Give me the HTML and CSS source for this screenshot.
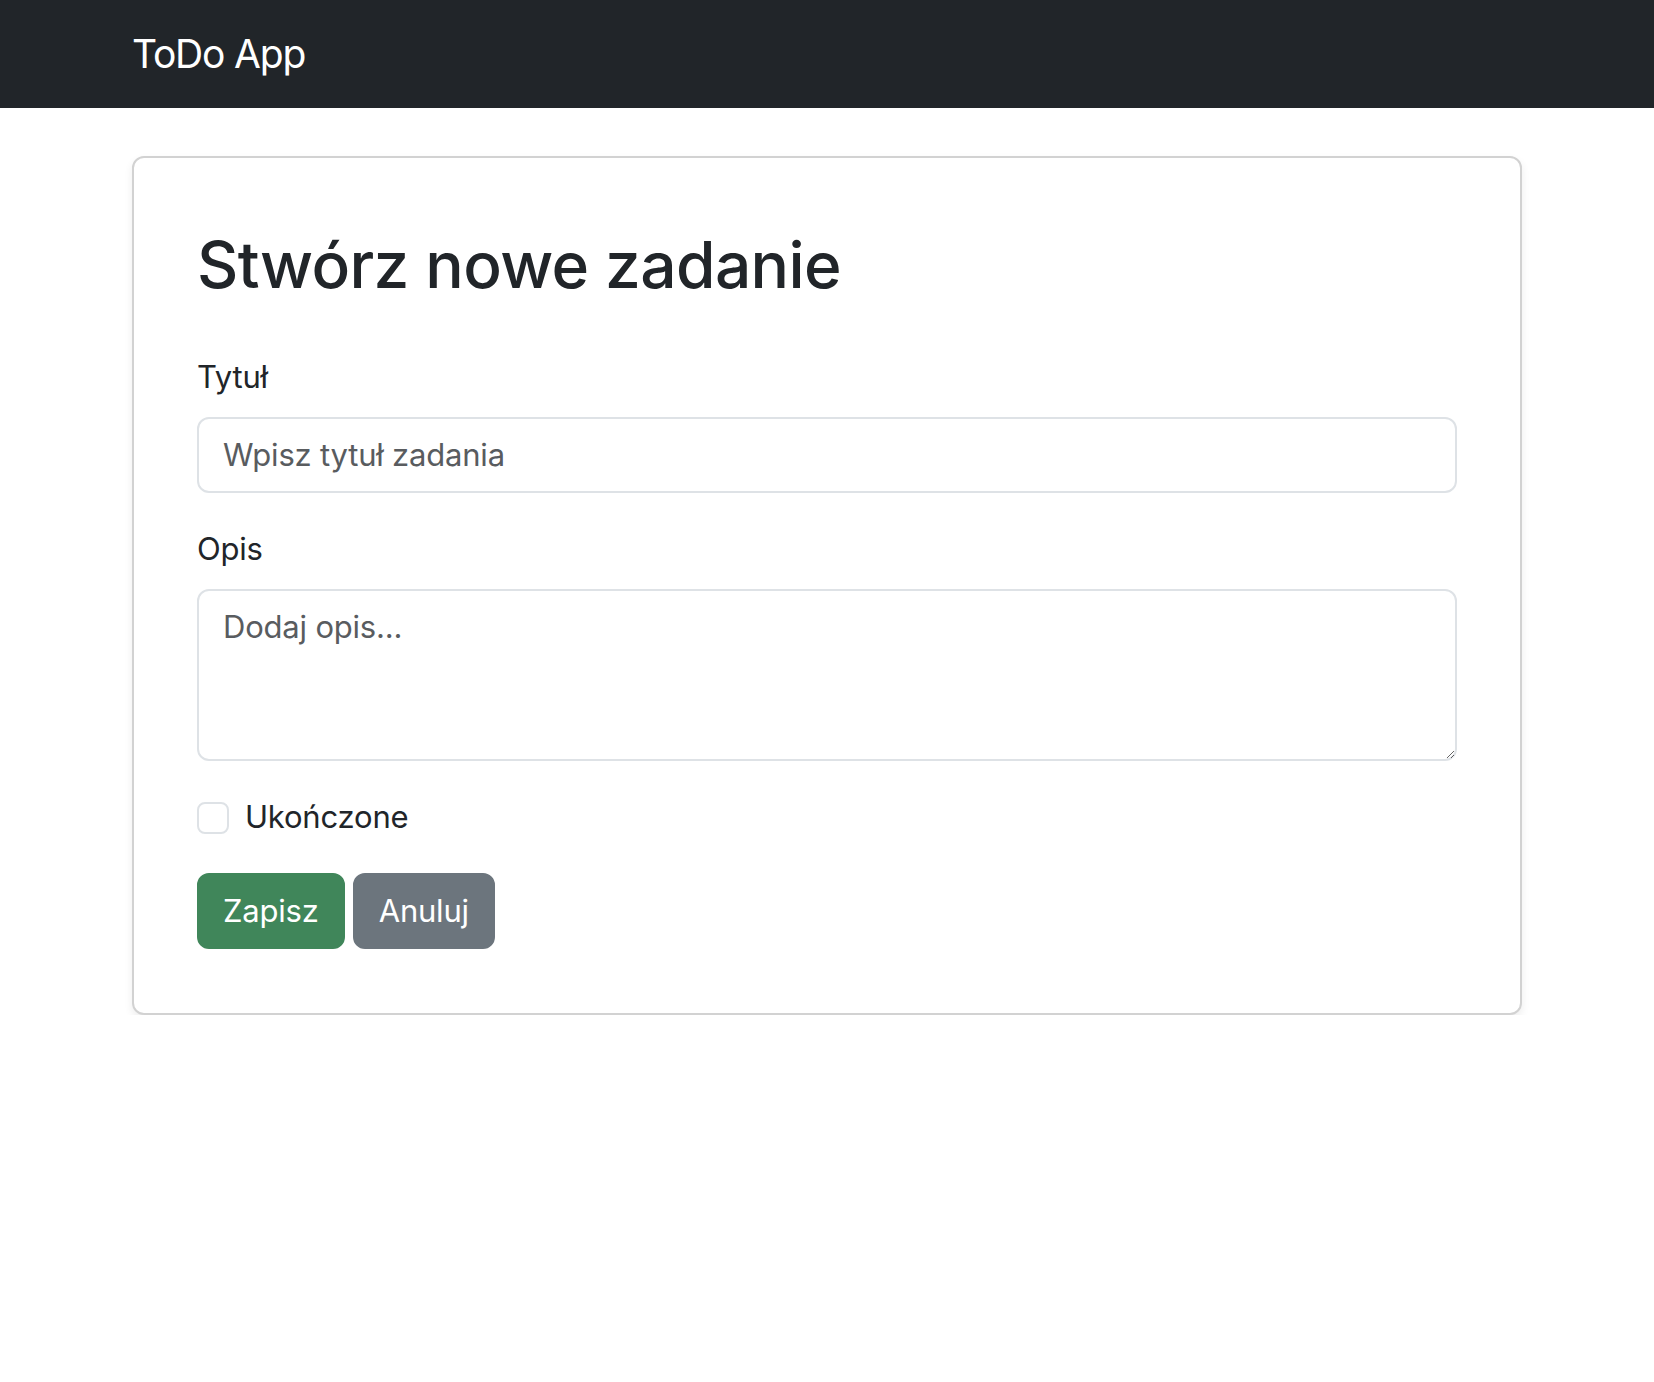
FILE: index.html
```html
<!DOCTYPE html>
<html lang="pl">
<head>
<meta charset="utf-8">
<title>ToDo App</title>
<link rel="stylesheet" href="styles.css">
</head>
<body>
<nav class="navbar">
  <div class="navbar-inner">
    <a class="brand" href="#">ToDo App</a>
  </div>
</nav>
<main class="container">
  <div class="card">
    <h2 class="card-title">Stwórz nowe zadanie</h2>
    <form class="form">
      <div class="field">
        <label class="field-label" for="title">Tytuł</label>
        <input class="control" id="title" type="text" placeholder="Wpisz tytuł zadania">
      </div>
      <div class="field">
        <label class="field-label" for="desc">Opis</label>
        <textarea class="control control-area" id="desc" rows="3" placeholder="Dodaj opis..."></textarea>
      </div>
      <div class="check-row">
        <input class="check" id="done" type="checkbox">
        <label class="check-label" for="done">Ukończone</label>
      </div>
      <div class="actions">
        <button class="btn btn-success" type="button">Zapisz</button>
        <button class="btn btn-secondary" type="button">Anuluj</button>
      </div>
    </form>
  </div>
</main>
</body>
</html>
```

FILE: styles.css
```css
* { box-sizing: border-box; }

html, body {
  margin: 0;
  padding: 0;
  background: #ffffff;
}

body {
  font-family: Inter, "Noto Sans", "Liberation Sans", sans-serif;
  color: #212529;
  font-size: 32px;
  line-height: 1.5;
}

.navbar {
  background: #212529;
  height: 108px;
}

.navbar-inner {
  width: 1390px;
  margin: 0 auto;
  height: 100%;
  display: flex;
  align-items: center;
}

.brand {
  color: #ffffff;
  text-decoration: none;
  font-size: 39px;
  line-height: 1.5;
  letter-spacing: -1.2px;
}

.container {
  width: 1390px;
  margin: 48px auto 0;
}

.card {
  border: 2px solid #d2d2d2;
  border-radius: 12px;
  background: #ffffff;
  box-shadow: 0 4px 8px rgba(0, 0, 0, 0.075);
  padding: 64px 63px;
}

.card-title {
  font-size: 64px;
  font-weight: 500;
  line-height: 1.2;
  margin: 0 0 49px;
  padding-top: 5px;
  letter-spacing: -0.6px;
}

.form {
  display: flex;
  flex-direction: column;
}

.field {
  margin-bottom: 32px;
}

.field-label {
  display: block;
  margin-bottom: 16px;
  font-size: 31px;
  line-height: 48px;
  letter-spacing: -0.2px;
}

.control {
  display: block;
  width: 100%;
  height: 76px;
  border: 2px solid #dee2e6;
  border-radius: 12px;
  padding: 12px 24px;
  font-family: inherit;
  font-size: 31px;
  line-height: 48px;
  color: #212529;
  background: #ffffff;
  letter-spacing: -0.2px;
}

.control::placeholder {
  color: #595c5f;
  opacity: 1;
}

.control-area {
  height: 172px;
  resize: vertical;
}

.check-row {
  display: flex;
  align-items: flex-start;
  min-height: 48px;
  margin-bottom: 32px;
}

.check {
  appearance: none;
  -webkit-appearance: none;
  width: 32px;
  height: 32px;
  margin: 9px 16px 0 0;
  border: 2px solid #dee2e6;
  border-radius: 8px;
  background: #ffffff;
  flex: none;
}

.check-label {
  font-size: 31px;
  line-height: 48px;
  letter-spacing: -0.2px;
}

.actions {
  display: flex;
  gap: 8px;
}

.btn {
  height: 76px;
  padding: 0 24px;
  border: 2px solid transparent;
  border-radius: 12px;
  font-family: inherit;
  font-size: 31px;
  line-height: 48px;
  color: #ffffff;
  letter-spacing: -0.2px;
  cursor: pointer;
}

.btn-success {
  background: #40865a;
  border-color: #40865a;
}

.btn-secondary {
  background: #6c757d;
  border-color: #6c757d;
}
```
